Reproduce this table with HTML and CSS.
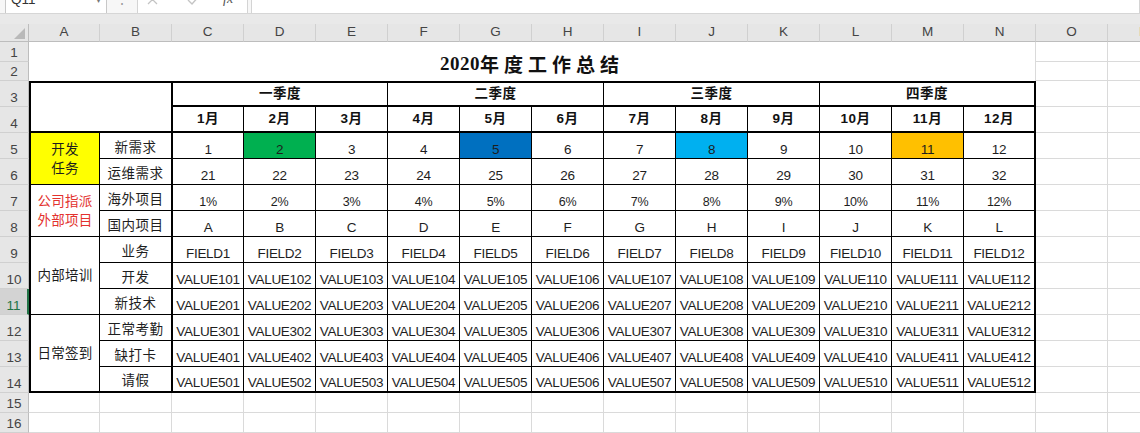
FILE: index.html
```html
<!DOCTYPE html>
<html lang="zh-CN">
<head>
<meta charset="utf-8">
<title>2020年度工作总结</title>
<link rel="stylesheet" href="styles.css">
</head>
<body>
<div class="fbar-wrap">
  <div class="fbar">
    <div class="namebox"><span class="nb-text">Q11</span><span class="nb-arrow">▾</span></div>
    <div class="fsep">⋮</div>
    <div class="fbtns">
      <svg class="ic-x" width="11" height="11" viewBox="0 0 11 11"><path d="M1 1L10 10M10 1L1 10" stroke="#c4c4c4" stroke-width="1.3" fill="none"/></svg>
      <svg class="ic-ok" width="14" height="11" viewBox="0 0 14 11"><path d="M1 6L5 10L13 1" stroke="#c4c4c4" stroke-width="1.4" fill="none"/></svg>
      <span class="fx">fx</span>
    </div>
    <div class="finput"></div>
  </div>
</div>
<div class="gap"></div>
<div class="sheet">
  <div class="corner"><svg width="11" height="11" viewBox="0 0 11 11"><path d="M11 0V11H0Z" fill="#b9b9b9"/></svg></div>
  <div class="ch">A</div><div class="ch">B</div><div class="ch">C</div><div class="ch">D</div><div class="ch">E</div><div class="ch">F</div><div class="ch">G</div><div class="ch">H</div><div class="ch">I</div><div class="ch">J</div><div class="ch">K</div><div class="ch">L</div><div class="ch">M</div><div class="ch">N</div><div class="ch">O</div><div class="ch">P</div>

  <div class="rh">1</div>
  <div class="title"><span class="num">2020</span><span class="zh-t">年度工作总结</span></div>
  <div class="g"></div><div class="g"></div>

  <div class="rh">2</div>
  <div class="g"></div><div class="g"></div>

  <div class="rh">3</div>
  <div class="t span-c2 span-r2 bl2 bt2 bb2"></div>
  <div class="t q span-c3 bt2 bb2 cl">一季度</div>
  <div class="t q span-c3 bt2 bb2">二季度</div>
  <div class="t q span-c3 bt2 bb2">三季度</div>
  <div class="t q span-c3 bt2 bb2 br2">四季度</div>
  <div class="g"></div><div class="g"></div>

  <div class="rh">4</div>
  <div class="t m bb2 cl">1月</div><div class="t m bb2">2月</div><div class="t m bb2">3月</div><div class="t m bb2">4月</div><div class="t m bb2">5月</div><div class="t m bb2">6月</div><div class="t m bb2">7月</div><div class="t m bb2">8月</div><div class="t m bb2">9月</div><div class="t m bb2">10月</div><div class="t m bb2">11月</div><div class="t m bb2 br2">12月</div>
  <div class="g"></div><div class="g"></div>

  <div class="rh">5</div>
  <div class="t merge span-r2 bl2 yellow">开发<br>任务</div>
  <div class="t zh">新需求</div>
  <div class="t cl">1</div><div class="t green">2</div><div class="t">3</div><div class="t">4</div><div class="t blue">5</div><div class="t">6</div><div class="t">7</div><div class="t sky">8</div><div class="t">9</div><div class="t">10</div><div class="t orange">11</div><div class="t br2">12</div>
  <div class="g"></div><div class="g"></div>

  <div class="rh">6</div>
  <div class="t zh">运维需求</div>
  <div class="t cl">21</div><div class="t">22</div><div class="t">23</div><div class="t">24</div><div class="t">25</div><div class="t">26</div><div class="t">27</div><div class="t">28</div><div class="t">29</div><div class="t">30</div><div class="t">31</div><div class="t br2">32</div>
  <div class="g"></div><div class="g"></div>

  <div class="rh">7</div>
  <div class="t merge span-r2 bl2 red">公司指派<br>外部项目</div>
  <div class="t zh">海外项目</div>
  <div class="t pc cl">1%</div><div class="t pc">2%</div><div class="t pc">3%</div><div class="t pc">4%</div><div class="t pc">5%</div><div class="t pc">6%</div><div class="t pc">7%</div><div class="t pc">8%</div><div class="t pc">9%</div><div class="t pc">10%</div><div class="t pc">11%</div><div class="t pc br2">12%</div>
  <div class="g"></div><div class="g"></div>

  <div class="rh">8</div>
  <div class="t zh">国内项目</div>
  <div class="t cl">A</div><div class="t">B</div><div class="t">C</div><div class="t">D</div><div class="t">E</div><div class="t">F</div><div class="t">G</div><div class="t">H</div><div class="t">I</div><div class="t">J</div><div class="t">K</div><div class="t br2">L</div>
  <div class="g"></div><div class="g"></div>

  <div class="rh">9</div>
  <div class="t merge span-r3 bl2">内部培训</div>
  <div class="t zh">业务</div>
  <div class="t cl">FIELD1</div><div class="t">FIELD2</div><div class="t">FIELD3</div><div class="t">FIELD4</div><div class="t">FIELD5</div><div class="t">FIELD6</div><div class="t">FIELD7</div><div class="t">FIELD8</div><div class="t">FIELD9</div><div class="t">FIELD10</div><div class="t">FIELD11</div><div class="t br2">FIELD12</div>
  <div class="g"></div><div class="g"></div>

  <div class="rh">10</div>
  <div class="t zh">开发</div>
  <div class="t cl">VALUE101</div><div class="t">VALUE102</div><div class="t">VALUE103</div><div class="t">VALUE104</div><div class="t">VALUE105</div><div class="t">VALUE106</div><div class="t">VALUE107</div><div class="t">VALUE108</div><div class="t">VALUE109</div><div class="t">VALUE110</div><div class="t">VALUE111</div><div class="t br2">VALUE112</div>
  <div class="g"></div><div class="g"></div>

  <div class="rh sel">11</div>
  <div class="t zh">新技术</div>
  <div class="t cl">VALUE201</div><div class="t">VALUE202</div><div class="t">VALUE203</div><div class="t">VALUE204</div><div class="t">VALUE205</div><div class="t">VALUE206</div><div class="t">VALUE207</div><div class="t">VALUE208</div><div class="t">VALUE209</div><div class="t">VALUE210</div><div class="t">VALUE211</div><div class="t br2">VALUE212</div>
  <div class="g"></div><div class="g"></div>

  <div class="rh">12</div>
  <div class="t merge span-r3 bl2 bb2">日常签到</div>
  <div class="t zh">正常考勤</div>
  <div class="t cl">VALUE301</div><div class="t">VALUE302</div><div class="t">VALUE303</div><div class="t">VALUE304</div><div class="t">VALUE305</div><div class="t">VALUE306</div><div class="t">VALUE307</div><div class="t">VALUE308</div><div class="t">VALUE309</div><div class="t">VALUE310</div><div class="t">VALUE311</div><div class="t br2">VALUE312</div>
  <div class="g"></div><div class="g"></div>

  <div class="rh">13</div>
  <div class="t zh">缺打卡</div>
  <div class="t cl">VALUE401</div><div class="t">VALUE402</div><div class="t">VALUE403</div><div class="t">VALUE404</div><div class="t">VALUE405</div><div class="t">VALUE406</div><div class="t">VALUE407</div><div class="t">VALUE408</div><div class="t">VALUE409</div><div class="t">VALUE410</div><div class="t">VALUE411</div><div class="t br2">VALUE412</div>
  <div class="g"></div><div class="g"></div>

  <div class="rh">14</div>
  <div class="t zh bb2">请假</div>
  <div class="t cl bb2">VALUE501</div><div class="t bb2">VALUE502</div><div class="t bb2">VALUE503</div><div class="t bb2">VALUE504</div><div class="t bb2">VALUE505</div><div class="t bb2">VALUE506</div><div class="t bb2">VALUE507</div><div class="t bb2">VALUE508</div><div class="t bb2">VALUE509</div><div class="t bb2">VALUE510</div><div class="t bb2">VALUE511</div><div class="t bb2 br2">VALUE512</div>
  <div class="g"></div><div class="g"></div>

  <div class="rh">15</div>
  <div class="g"></div><div class="g"></div><div class="g"></div><div class="g"></div><div class="g"></div><div class="g"></div><div class="g"></div><div class="g"></div><div class="g"></div><div class="g"></div><div class="g"></div><div class="g"></div><div class="g"></div><div class="g"></div><div class="g"></div><div class="g"></div>

  <div class="rh">16</div>
  <div class="g"></div><div class="g"></div><div class="g"></div><div class="g"></div><div class="g"></div><div class="g"></div><div class="g"></div><div class="g"></div><div class="g"></div><div class="g"></div><div class="g"></div><div class="g"></div><div class="g"></div><div class="g"></div><div class="g"></div><div class="g"></div>
</div>
</body>
</html>
```

FILE: styles.css
```css
* { box-sizing: border-box; margin: 0; padding: 0; }
html, body { width: 1140px; height: 433px; overflow: hidden; background: #fff; }
body {
  font-family: "Liberation Sans", "Noto Sans CJK SC", sans-serif;
  font-size: 13.5px;
  color: #1e1e1e;
}

/* formula bar (only its lower part is visible) */
.fbar-wrap {
  height: 14px;
  overflow: hidden;
  background: #f7f7f7;
  border-bottom: 1px solid #d6d6d6;
}
.fbar {
  display: flex;
  height: 30px;
  margin-top: -16px;
}
.namebox {
  margin-left: 5px;
  width: 102px;
  background: #fff;
  border: 1px solid #c8c8c8;
  display: flex;
  align-items: center;
  padding-left: 5px;
  color: #333;
}
.nb-arrow { margin-left: auto; margin-right: 5px; font-size: 10px; color: #777; }
.fsep {
  width: 30px;
  display: flex;
  align-items: center;
  justify-content: center;
  color: #9a9a9a;
  font-size: 14px;
}
.fbtns {
  width: 111px;
  background: #fff;
  border: 1px solid #d4d4d4;
  display: flex;
  align-items: center;
  padding-left: 9px;
}
.ic-ok { margin-left: 29px; }
.fx {
  margin-left: 22px;
  font-family: "Liberation Serif", serif;
  font-style: italic;
  font-size: 14px;
  color: #555;
}
.finput {
  flex: 1;
  margin-left: 3px;
  background: #fff;
  border: 1px solid #d4d4d4;
}
.gap { height: 10px; background: #e9e9e9; }

/* sheet grid */
.sheet {
  display: grid;
  grid-template-columns: 29px 71px repeat(14, 72px) 72px;
  grid-template-rows: 18px 20px 19px repeat(12, 26px) 20px 20px;
  width: 1180px;
}
.corner {
  background: #e6e6e6;
  border-right: 1px solid #bdbdbd;
  border-bottom: 1px solid #bdbdbd;
  display: flex;
  align-items: flex-end;
  justify-content: flex-end;
  padding: 0 3px 2px 0;
}
.ch {
  background: #e6e6e6;
  border-right: 1px solid #d0d0d0;
  border-bottom: 1px solid #bdbdbd;
  color: #444;
  display: flex;
  align-items: flex-end;
  justify-content: center;
  line-height: 14px;
  padding-bottom: 2px;
}
.rh {
  background: #e6e6e6;
  border-right: 1px solid #bdbdbd;
  border-bottom: 1px solid #d0d0d0;
  color: #444;
  display: flex;
  align-items: flex-end;
  justify-content: center;
  line-height: 14px;
  padding-bottom: 1px;
}
.rh.sel {
  background: #d3d3d3;
  color: #217346;
  border-right: 2px solid #217346;
}
.g {
  border-right: 1px solid #dadada;
  border-bottom: 1px solid #dadada;
}
.title {
  grid-column: span 14;
  grid-row: span 2;
  border-right: 1px solid #dadada;
  display: flex;
  align-items: center;
  justify-content: center;
  font-weight: bold;
  font-size: 19px;
  color: #111;
  padding-top: 4px;
}
.title .num { font-family: "Liberation Serif", serif; letter-spacing: 0.5px; }
.title .zh-t { letter-spacing: 5px; }

.t {
  border-right: 1px solid #000;
  border-bottom: 1px solid #000;
  display: flex;
  align-items: flex-end;
  justify-content: center;
  line-height: 14px;
  padding-bottom: 1px;
  white-space: nowrap;
  letter-spacing: -0.3px;
}
.zh { letter-spacing: 0.5px; padding-bottom: 3px; }
.q, .m {
  font-weight: bold;
  color: #111;
  align-items: center;
  padding-bottom: 0;
  letter-spacing: 0.5px;
}
.pc { font-size: 12.5px; }
.merge {
  align-items: center;
  text-align: center;
  line-height: 19px;
  padding-bottom: 0;
  letter-spacing: 0.3px;
  white-space: normal;
}
.cl { border-left: 1px solid #000; }
.bl2 { border-left: 2px solid #000; }
.bt2 { border-top: 2px solid #000; }
.bb2 { border-bottom-width: 2px; }
.br2 { border-right-width: 2px; }
.span-c2 { grid-column: span 2; }
.span-c3 { grid-column: span 3; }
.span-r2 { grid-row: span 2; }
.span-r3 { grid-row: span 3; }

.yellow { background: #ffff00; }
.red { color: #e3322e; }
.green { background: #00b050; }
.blue { background: #0070c0; }
.sky { background: #00b0f0; }
.orange { background: #ffc000; }
```
